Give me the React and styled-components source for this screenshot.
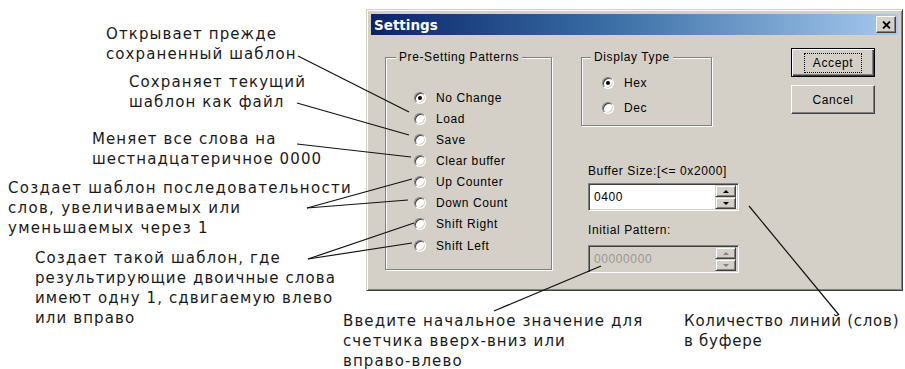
import React from "react";
import styled, { createGlobalStyle } from "styled-components";

const GlobalStyle = createGlobalStyle`
  html, body {
    margin: 0;
    padding: 0;
    background: #fff;
  }
  body {
    font-family: "DejaVu Sans", "Noto Sans", sans-serif;
  }
`;

const Figure = styled.div`
  position: relative;
  width: 905px;
  height: 369px;
  overflow: hidden;
  display: flex;
  align-items: flex-start;
`;

const Dialog = styled.div`
  margin: 9px 0 0 366px;
  width: 537px;
  height: 282px;
  box-sizing: border-box;
  padding: 4px;
  background: #d4d0c8;
  border: 1px solid;
  border-color: #d4d0c8 #404040 #404040 #d4d0c8;
  box-shadow: inset 1px 1px 0 #fff, inset -1px -1px 0 #808080;
  display: flex;
  flex-direction: column;
  font-family: "Liberation Sans", Arial, sans-serif;
  font-size: 12px;
  letter-spacing: 0.6px;
  color: #000;
`;

const TitleBar = styled.div`
  height: 21px;
  display: flex;
  align-items: center;
  justify-content: space-between;
  padding: 0 2px 0 3px;
  background: linear-gradient(90deg, #0a246a 0%, #3a6ea5 45%, #a6caf0 100%);
`;

const Title = styled.span`
  font-family: "DejaVu Sans", sans-serif;
  font-weight: bold;
  font-size: 13.5px;
  letter-spacing: 0;
  color: #fff;
`;

const CloseButton = styled.div`
  width: 20px;
  height: 17px;
  box-sizing: border-box;
  background: #d4d0c8;
  border: 1px solid;
  border-color: #fff #404040 #404040 #fff;
  box-shadow: inset -1px -1px 0 #808080;
  display: flex;
  align-items: center;
  justify-content: center;
`;

const Body = styled.div`
  flex: 1;
  display: flex;
  align-items: flex-start;
  padding: 22px 0 0 14px;
`;

const Group = styled.div`
  position: relative;
  box-sizing: border-box;
  width: ${(p) => p.$w}px;
  height: ${(p) => p.$h}px;
  border: 1px solid #808080;
  box-shadow: inset 1px 1px 0 #fff, 1px 1px 0 #fff;
  padding: ${(p) => p.$pad};
  display: flex;
  flex-direction: column;
`;

const Legend = styled.span`
  position: absolute;
  top: -8px;
  left: ${(p) => p.$left}px;
  padding: 0 3px;
  background: #d4d0c8;
  line-height: 14px;
`;

const RadioRow = styled.div`
  height: ${(p) => p.$h}px;
  display: flex;
  align-items: center;
  gap: 10px;
  white-space: nowrap;
`;

const RadioDot = styled.span`
  position: relative;
  width: 12px;
  height: 12px;
  flex: none;
  box-sizing: border-box;
  border-radius: 50%;
  background: #fff;
  border: 1px solid;
  border-color: #808080 #fff #fff #808080;
  box-shadow: inset 1px 1px 0 #404040, inset -1px -1px 0 #d4d0c8;

  &::after {
    content: "";
    display: ${(p) => (p.$checked ? "block" : "none")};
    position: absolute;
    left: 3px;
    top: 3px;
    width: 4px;
    height: 4px;
    border-radius: 50%;
    background: #000;
  }
`;

const MiddleColumn = styled.div`
  margin-left: 29px;
  width: 158px;
  display: flex;
  flex-direction: column;
`;

const FieldLabel = styled.div`
  line-height: 14px;
  margin: ${(p) => p.$m};
  padding-left: 7px;
  white-space: nowrap;
`;

const Field = styled.div`
  margin-left: 7px;
  width: 151px;
  height: 28px;
  box-sizing: border-box;
  padding: 2px;
  display: flex;
  align-items: center;
  background: ${(p) => (p.$disabled ? "#d4d0c8" : "#fff")};
  border: 1px solid;
  border-color: #808080 #fff #fff #808080;
  box-shadow: inset 1px 1px 0 #404040, inset -1px -1px 0 #d4d0c8;
  color: ${(p) => (p.$disabled ? "#9a9890" : "#000")};
`;

const FieldText = styled.span`
  flex: 1;
  padding-left: 3px;
`;

const Spinner = styled.div`
  width: 21px;
  height: 24px;
  display: flex;
  flex-direction: column;
`;

const SpinButton = styled.div`
  flex: 1;
  box-sizing: border-box;
  background: #d4d0c8;
  border: 1px solid;
  border-color: #d4d0c8 #404040 #404040 #d4d0c8;
  box-shadow: inset 1px 1px 0 #fff, inset -1px -1px 0 #808080;
  display: flex;
  align-items: center;
  justify-content: center;

  &::before {
    content: "";
    width: 0;
    height: 0;
    border-left: 3px solid transparent;
    border-right: 3px solid transparent;
    ${(p) =>
      p.$up
        ? `border-bottom: 3px solid ${p.$disabled ? "#808080" : "#000"};`
        : `border-top: 3px solid ${p.$disabled ? "#808080" : "#000"};`}
  }
`;

const ButtonColumn = styled.div`
  margin: -9px 0 0 52px;
  display: flex;
  flex-direction: column;
  gap: 8px;
`;

const Button = styled.div`
  width: 84px;
  height: 29px;
  box-sizing: border-box;
  display: flex;
  align-items: center;
  justify-content: center;
  background: #d4d0c8;
  border: 1px solid;
  border-color: ${(p) =>
    p.$default ? "#000" : "#fff #404040 #404040 #fff"};
  box-shadow: ${(p) =>
    p.$default
      ? "inset 1px 1px 0 #fff, inset -1px -1px 0 #404040, inset -2px -2px 0 #808080"
      : "inset -1px -1px 0 #808080"};
  position: relative;
`;

const FocusRing = styled.span`
  padding: 2px 8px;
  border: 1px dotted #000;
`;

const Callout = styled.div`
  position: absolute;
  left: ${(p) => p.$x}px;
  top: ${(p) => p.$y}px;
  font-size: 15px;
  line-height: 20px;
  letter-spacing: ${(p) => p.$ls || 1.1}px;
  color: #1a1a1a;
  white-space: pre;
`;

const Leaders = styled.svg`
  position: absolute;
  left: 0;
  top: 0;
  pointer-events: none;
`;

const presets = [
  "No Change",
  "Load",
  "Save",
  "Clear buffer",
  "Up Counter",
  "Down Count",
  "Shift Right",
  "Shift Left",
];

const notes = [
  { x: 106, y: 24, text: "Открывает прежде\nсохраненный шаблон" },
  { x: 129, y: 72, text: "Сохраняет текущий\nшаблон как файл" },
  { x: 92, y: 129, text: "Меняет все слова на\nшестнадцатеричное 0000" },
  {
    x: 8,
    y: 178,
    ls: 1.3,
    text: "Создает шаблон последовательности\nслов, увеличиваемых или\nуменьшаемых через 1",
  },
  {
    x: 35,
    y: 248,
    text: "Создает такой шаблон, где\nрезультирующие двоичные слова\nимеют одну 1, сдвигаемую влево\nили вправо",
  },
  {
    x: 343,
    y: 311,
    text: "Введите начальное значение для\nсчетчика вверх-вниз или\nвправо-влево",
  },
  { x: 684, y: 311, ls: 0.75, text: "Количество линий (слов)\nв буфере" },
];

const lines = [
  [298, 56, 409, 112],
  [297, 103, 409, 135],
  [297, 144, 411, 157],
  [307, 208, 412, 179],
  [307, 208, 408, 200],
  [308, 259, 414, 223],
  [308, 259, 412, 243],
  [494, 311, 601, 266],
  [749, 206, 839, 315],
];

const SpinField = ({ value, disabled }) => (
  <Field $disabled={disabled}>
    <FieldText>{value}</FieldText>
    <Spinner>
      <SpinButton $up $disabled={disabled} />
      <SpinButton $disabled={disabled} />
    </Spinner>
  </Field>
);

const App = () => {
  return (
    <>
      <GlobalStyle />
      <Figure>
        <Dialog>
          <TitleBar>
            <Title>Settings</Title>
            <CloseButton>
              <svg width="9" height="8" viewBox="0 0 9 8">
                <path
                  d="M1 0.5 L8 7.5 M8 0.5 L1 7.5"
                  stroke="#000"
                  strokeWidth="1.8"
                />
              </svg>
            </CloseButton>
          </TitleBar>
          <Body>
            <Group $w={167} $h={213} $pad="29px 0 0 28px">
              <Legend $left={10}>Pre-Setting Patterns</Legend>
              {presets.map((label, i) => (
                <RadioRow key={label} $h={21.15}>
                  <RadioDot $checked={i === 0} />
                  {label}
                </RadioRow>
              ))}
            </Group>
            <MiddleColumn>
              <Group $w={131} $h={69} $pad="12px 0 0 20px">
                <Legend $left={9}>Display Type</Legend>
                <RadioRow $h={25}>
                  <RadioDot $checked />
                  Hex
                </RadioRow>
                <RadioRow $h={25}>
                  <RadioDot />
                  Dec
                </RadioRow>
              </Group>
              <FieldLabel $m="38px 0 5px">Buffer Size:[&lt;= 0x2000]</FieldLabel>
              <SpinField value="0400" />
              <FieldLabel $m="12px 0 8px">Initial Pattern:</FieldLabel>
              <SpinField value="00000000" disabled />
            </MiddleColumn>
            <ButtonColumn>
              <Button $default>
                <FocusRing>Accept</FocusRing>
              </Button>
              <Button>Cancel</Button>
            </ButtonColumn>
          </Body>
        </Dialog>
        {notes.map((n) => (
          <Callout key={n.text} $x={n.x} $y={n.y} $ls={n.ls}>
            {n.text}
          </Callout>
        ))}
        <Leaders width="905" height="369">
          {lines.map(([x1, y1, x2, y2], i) => (
            <line
              key={i}
              x1={x1}
              y1={y1}
              x2={x2}
              y2={y2}
              stroke="#111"
              strokeWidth="1.2"
            />
          ))}
        </Leaders>
      </Figure>
    </>
  );
};

export default App;
